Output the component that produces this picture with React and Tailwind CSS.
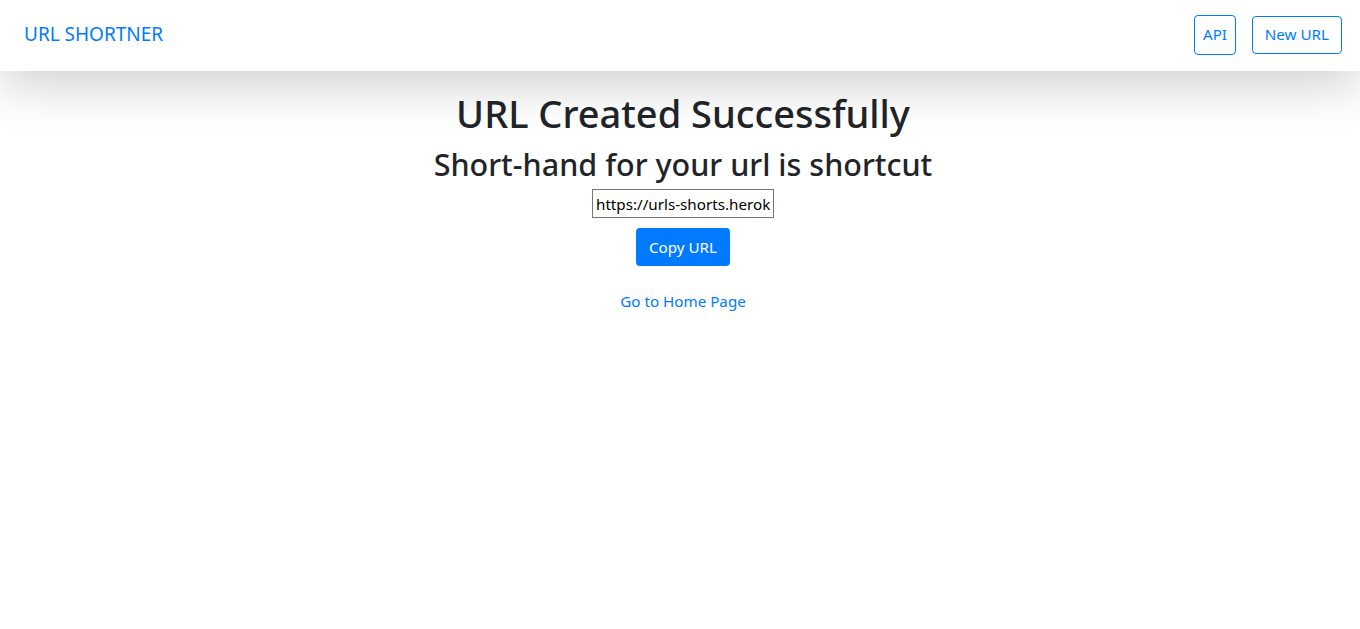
export default function App() {
  const font = { fontFamily: '"Noto Sans", "Open Sans", sans-serif' };
  return (
    <div className="min-h-[629px] bg-white text-[#212529]" style={font}>
      <nav className="relative z-10 flex h-[71px] items-center justify-between bg-white pb-[2px] pl-6 pr-[18px] shadow-[0_1rem_3rem_rgba(0,0,0,0.175)]">
        <a className="text-[19px] text-[#007bff]">URL SHORTNER</a>
        <div className="flex items-center gap-4">
          <button className="h-10 rounded border border-[#007bff] px-[8px] text-[15px] text-[#007bff]">API</button>
          <button className="h-[38px] rounded border border-[#007bff] px-3 text-[15.2px] text-[#007bff]">New URL</button>
        </div>
      </nav>
      <main className="flex flex-col items-center pl-[6px] pt-[18px]">
        <h1 className="mb-2 text-[38px] font-medium leading-[48px]">URL Created Successfully</h1>
        <h2 className="text-[30.5px] font-medium leading-[38px]">Short-hand for your url is shortcut</h2>
        <input
          readOnly
          value="https://urls-shorts.herokuapp.com/shortcut"
          className="mt-[6px] h-[29px] w-[182px] border border-[#767676] px-[3px] text-[15.2px] text-black"
        />
        <button className="mt-[10px] h-[38px] rounded bg-[#007bff] px-[13px] text-[15.2px] text-white">Copy URL</button>
        <a className="mt-[24px] text-[15.2px] text-[#007bff]">Go to Home Page</a>
      </main>
    </div>
  );
}
